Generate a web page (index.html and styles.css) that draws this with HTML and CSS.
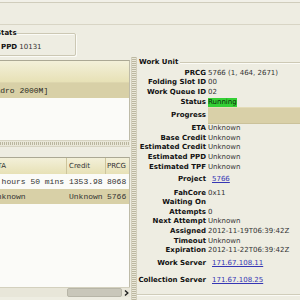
FILE: index.html
```html
<!DOCTYPE html>
<html>
<head>
<meta charset="utf-8">
<link rel="stylesheet" href="styles.css">
</head>
<body>
<div class="app">
  <div class="strip"></div>
  <div class="toolarea"></div>
  <div class="statsrow">
    <fieldset class="stats">
      <legend>Stats</legend>
      <div class="stats-line"><b>PPD</b> 10131</div>
    </fieldset>
  </div>
  <div class="split">
    <div class="left">
      <div class="frame">
        <div class="slot-head"></div>
        <div class="slot-row sel mono">[Quadro 2000M]</div>
        <div class="slot-body"></div>
      </div>
      <div class="hgrip"></div>
      <div class="gap"></div>
      <div class="frame">
        <div class="units-head">
          <div class="c1 eta">ETA</div>
          <div class="c2">Credit</div>
          <div class="c3">PRCG</div>
        </div>
        <div class="urow mono">
          <div class="c1 cut">2 hours 50 mins</div>
          <div class="c2">1353.98</div>
          <div class="c3">8068</div>
        </div>
        <div class="urow sel mono">
          <div class="c1 cut">Unknown</div>
          <div class="c2">Unknown</div>
          <div class="c3">5766</div>
        </div>
        <div class="units-body"></div>
      </div>
      <div class="hscroll">
        <div class="track"></div>
        <div class="thumb"></div>
        <div class="arrow"><svg width="5" height="6" viewBox="0 0 5 6"><path d="M1 0.5 L3.8 3 L1 5.5" fill="none" stroke="#222" stroke-width="1.4"/></svg></div>
      </div>
    </div>
    <div class="vgrip"></div>
    <div class="right">
      <div class="wu-head"><span class="title">Work Unit</span><span class="rule"></span></div>
      <div class="rows">
        <div class="kv"><span class="k">PRCG</span><span class="v">5766 (1, 464, 2671)</span></div>
        <div class="kv"><span class="k">Folding Slot ID</span><span class="v">00</span></div>
        <div class="kv"><span class="k">Work Queue ID</span><span class="v">02</span></div>
        <div class="kv"><span class="k">Status</span><span class="v"><span class="run">Running</span></span></div>
        <div class="kv progress"><span class="k">Progress</span><span class="v"><span class="bar"></span></span></div>
        <div class="kv"><span class="k">ETA</span><span class="v">Unknown</span></div>
        <div class="kv"><span class="k">Base Credit</span><span class="v">Unknown</span></div>
        <div class="kv"><span class="k">Estimated Credit</span><span class="v">Unknown</span></div>
        <div class="kv"><span class="k">Estimated PPD</span><span class="v">Unknown</span></div>
        <div class="kv"><span class="k">Estimated TPF</span><span class="v">Unknown</span></div>
        <div class="kv linkrow"><span class="k">Project</span><span class="v"><a class="lnk">5766</a></span></div>
        <div class="kv core"><span class="k">FahCore</span><span class="v">0x11</span></div>
        <div class="kv"><span class="k">Waiting On</span><span class="v"></span></div>
        <div class="kv"><span class="k">Attempts</span><span class="v">0</span></div>
        <div class="kv"><span class="k">Next Attempt</span><span class="v">Unknown</span></div>
        <div class="kv"><span class="k">Assigned</span><span class="v">2012-11-19T06:39:42Z</span></div>
        <div class="kv"><span class="k">Timeout</span><span class="v">Unknown</span></div>
        <div class="kv"><span class="k">Expiration</span><span class="v">2012-11-22T06:39:42Z</span></div>
        <div class="kv linkrow"><span class="k">Work Server</span><span class="v"><a class="lnk">171.67.108.11</a></span></div>
        <div class="kv linkrow last"><span class="k">Collection Server</span><span class="v"><a class="lnk">171.67.108.25</a></span></div>
      </div>
      <div class="wu-foot"></div>
    </div>
  </div>
</div>
</body>
</html>
```
FILE: styles.css
```css
* { box-sizing: border-box; }
html, body { margin: 0; padding: 0; }
body {
  width: 300px; height: 300px; overflow: hidden;
  background: #eeede2;
  font-family: "DejaVu Sans", sans-serif;
  font-size: 7px;
  color: #222;
}
.app { width: 300px; height: 300px; display: flex; flex-direction: column; }
.strip { height: 3px; flex: none; background: #f1f0e8; border-bottom: 1px solid #d0cdbc; }
.toolarea { height: 22px; flex: none; border-bottom: 1px solid #d8d5c5; }
.statsrow { height: 32px; flex: none; padding-top: 4px; }

.stats {
  margin: 0 0 0 -12px;
  width: 88px; height: 27px;
  padding: 0 0 0 7px;
  border: 1px solid #ccc8b4;
  border-radius: 2px;
  box-shadow: inset 1px 1px 0 #fbfbf6, 1px 1px 0 #fbfbf6;
  min-inline-size: 0;
}
.stats legend { padding: 0; font-weight: bold; line-height: 9px; color: #111; }
.stats-line { margin-top: 5px; padding-left: 5px; line-height: 9px; color: #333; white-space: nowrap; }
.stats-line b { color: #111; }

.split { flex: 1; display: flex; min-height: 0; }

.left { width: 131px; flex: none; display: flex; flex-direction: column; padding-top: 3px; }
.frame {
  border-top: 1px solid #aba894;
  border-right: 1px solid #bebba8;
  margin-right: 1px;
  background: #fbfbf8;
}
.mono { font-family: "Liberation Mono", monospace; font-size: 8px; }
.sel { background: #d8d0a7; color: #2a2a22; }
.slot-head { height: 22px; background: linear-gradient(#f3f0d9, #e7e1b6); border-bottom: 1px solid #ddd6ae; }
.slot-row { height: 15px; line-height: 15px; overflow: hidden; white-space: nowrap; text-indent: -19px; }
.slot-body { height: 42px; }

.hgrip {
  height: 7px; flex: none; margin-right: 1px;
  border-top: 1px solid #d7d4c2; border-bottom: 1px solid #d7d4c2;
  background:
    repeating-linear-gradient(90deg, #bab69f 0 1px, transparent 1px 2px) center / 100% 3px no-repeat,
    #e9e7d8;
}
.gap { height: 10px; flex: none; }

.units-head {
  display: flex; height: 16px; line-height: 16px;
  background: linear-gradient(#f3f0d9, #e7e1b6);
  color: #333;
}
.units-head .c1, .units-head .c2 { border-right: 1px solid #cdc59b; }
.c1 { width: 67px; flex: none; overflow: hidden; white-space: nowrap; }
.c2 { width: 39px; flex: none; padding-left: 2px; white-space: nowrap; overflow: hidden; }
.c3 { flex: 1; padding-left: 1px; white-space: nowrap; overflow: hidden; }
.eta { text-indent: -7px; }
.cut { text-indent: -8px; }
.urow { display: flex; height: 15px; line-height: 15px; color: #333; }
.units-body { height: 83px; }

.hscroll {
  height: 10px; flex: none; display: flex; margin-right: 1px;
  background: #e8e6d9; border-top: 1px solid #d3d0be;
}
.track { width: 67px; flex: none; }
.thumb { width: 55px; flex: none; background: #c9c7ba; border: 1px solid #b7b5a7; border-radius: 2px; }
.arrow { width: 8px; flex: none; display: flex; align-items: center; justify-content: center; }

.vgrip {
  width: 6px; flex: none;
  border-left: 1px solid #d2cfbc; border-right: 1px solid #d2cfbc;
  background:
    repeating-linear-gradient(180deg, #bcb8a1 0 1px, transparent 1px 2px) center / 4px 100% no-repeat,
    #eae8d9;
}

.right { flex: 1; display: flex; flex-direction: column; min-width: 0; }
.wu-head { display: flex; align-items: center; height: 10px; flex: none; }
.wu-head .title { font-weight: bold; padding: 0 2px; line-height: 10px; color: #111; }
.wu-head .rule { flex: 1; border-top: 1px solid #cdc9b5; box-shadow: 0 1px 0 #fbfbf6; }
.rows { margin-top: 1.5px; }
.kv {
  display: grid; grid-template-columns: 69px 1fr; column-gap: 2px;
  height: 9.7px; line-height: 9.7px; white-space: nowrap;
}
.kv .k { text-align: right; font-weight: bold; color: #111; }
.kv .v { color: #333; overflow: hidden; }
.kv.progress { height: 16.7px; line-height: 16.7px; }
.kv.linkrow { height: 15.6px; line-height: 15.6px; }
.kv.last { height: 16px; line-height: 16px; }
.kv.core { height: 10px; line-height: 10px; }
.run { display: inline-block; background: #34cf34; color: #0b2a0b; height: 9.5px; line-height: 9.5px; }
.bar { display: block; height: 100%; background: #d9d0a8; border-top: 1px solid #e4dcb8; border-bottom: 1px solid #cbc29a; }
.lnk { color: #3636b4; text-decoration: underline; padding-left: 4px; }
.wu-foot { margin-top: 6px; border-top: 1px solid #d0cdba; box-shadow: 0 1px 0 #fbfbf6; }
```
